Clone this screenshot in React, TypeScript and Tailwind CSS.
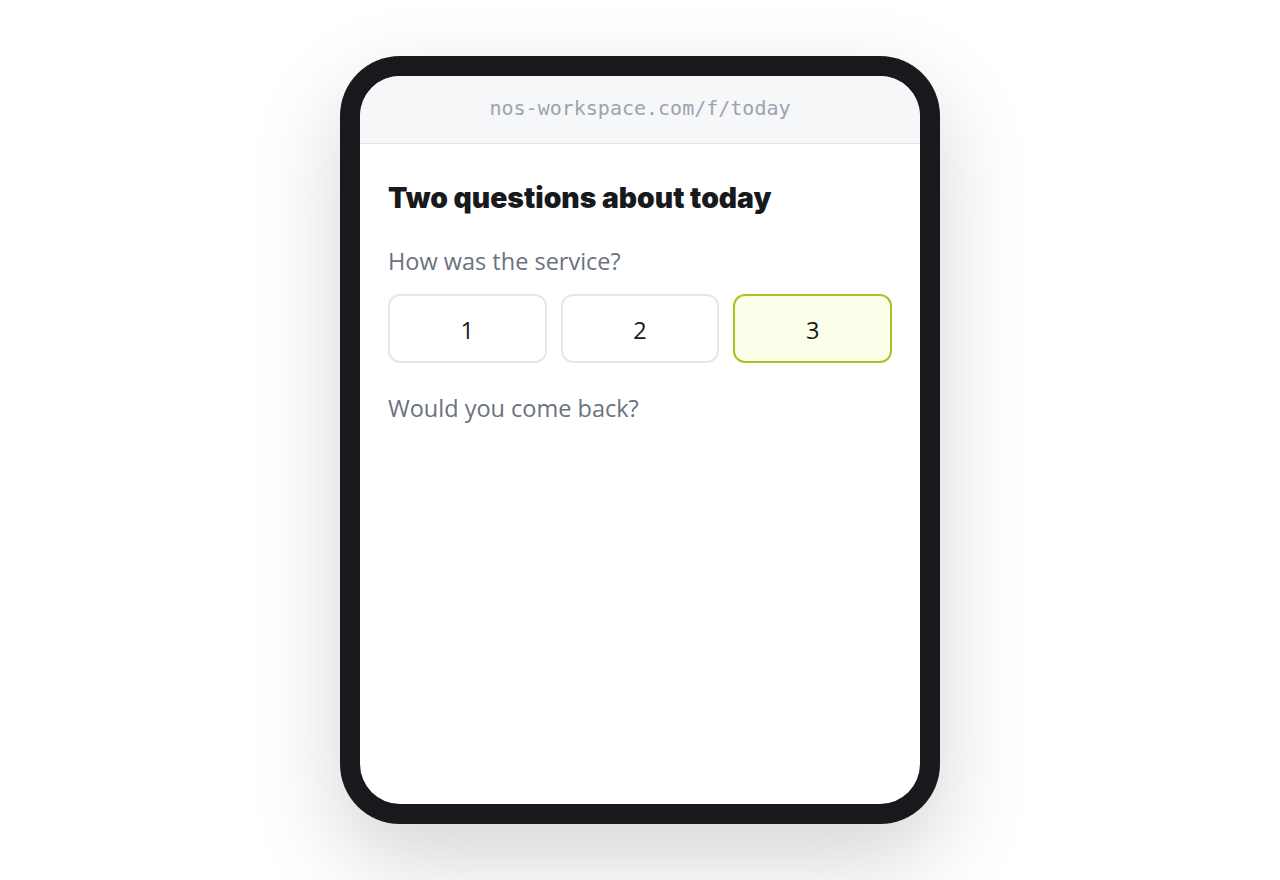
import React from "react";

export default function App() {
  const opts = [1, 2, 3];
  return (
    <div className="w-[1280px] h-[880px] bg-white flex items-start justify-center pt-[56px]">
      <div className="w-[600px] h-[768px] rounded-[60px] bg-[#17191d] p-[20px] shadow-[0_36px_90px_rgba(0,0,0,0.17)]">
        <div className="w-full h-full rounded-[40px] bg-white overflow-hidden flex flex-col">
          <div className="h-[68px] shrink-0 bg-[#f6f7f9] border-b border-[#e3e5e8] flex items-center justify-center pb-[4px]">
            <span className="text-[20px] text-[#9ca3af] font-['DejaVu_Sans_Mono',monospace] leading-none">
              nos-workspace.com/f/today
            </span>
          </div>
          <div className="px-[28px] pt-[36px] font-['Open_Sans',sans-serif]">
            <h1 className="text-[28.3px] leading-[36px] font-black text-[#17191d] font-['Inter',sans-serif]">
              Two questions about today
            </h1>
            <p className="mt-[29px] text-[23.5px] leading-[32px] text-[#6b7280]">How was the service?</p>
            <div className="mt-[17px] grid grid-cols-3 gap-[14px]">
              {opts.map((n) => (
                <button
                  key={n}
                  className={
                    n === 3
                      ? "h-[69px] pt-[5px] rounded-[12px] border-2 border-[#a8c422] bg-[#fbfee9] text-[23.5px] text-[#17191d]"
                      : "h-[69px] pt-[5px] rounded-[12px] border-2 border-[#e5e7eb] bg-white text-[23.5px] text-[#17191d]"
                  }
                >
                  {n}
                </button>
              ))}
            </div>
            <p className="mt-[29px] text-[23.5px] leading-[32px] text-[#6b7280]">Would you come back?</p>
          </div>
        </div>
      </div>
    </div>
  );
}
